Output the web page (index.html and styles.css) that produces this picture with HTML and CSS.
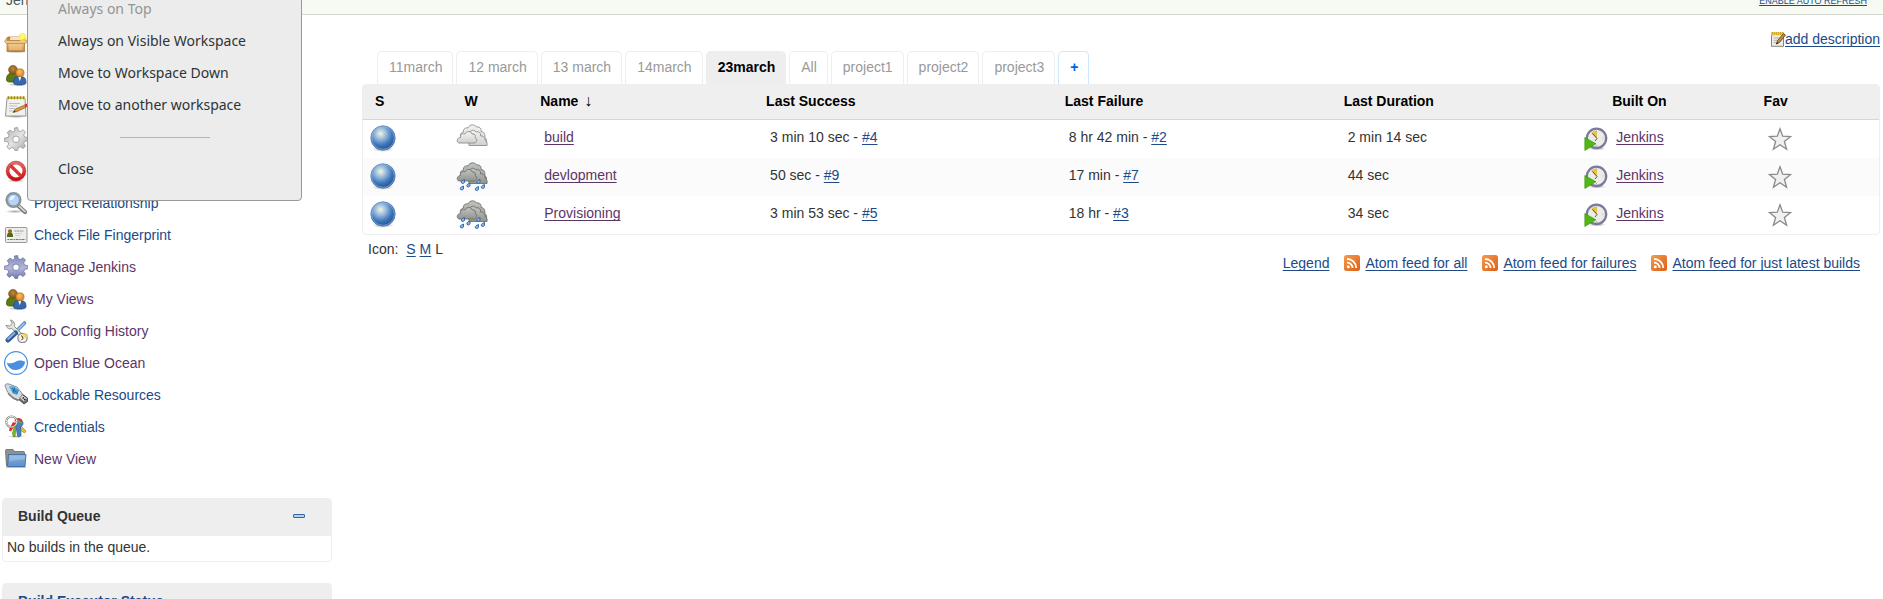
FILE: index.html
```html
<!DOCTYPE html>
<html lang="en">
<head>
<meta charset="utf-8">
<title>23march [Jenkins]</title>
<link rel="stylesheet" href="styles.css">
</head>
<body>
<svg class="sprite" width="0" height="0" aria-hidden="true">
  <defs>
    <radialGradient id="g-ball" cx=".4" cy=".32" r=".62"><stop offset="0" stop-color="#f3f6dc"/><stop offset=".35" stop-color="#9dbde0"/><stop offset=".75" stop-color="#3f78bb"/><stop offset="1" stop-color="#2b5c9e"/></radialGradient>
    <linearGradient id="g-cloud" x1="0" y1="0" x2="0" y2="1"><stop offset="0" stop-color="#f4f4f2"/><stop offset="1" stop-color="#cfcfcd"/></linearGradient>
    <linearGradient id="g-dark" x1="0" y1="0" x2="0" y2="1"><stop offset="0" stop-color="#c2c4c0"/><stop offset="1" stop-color="#91938f"/></linearGradient>
    <linearGradient id="g-grey" x1="0" y1="0" x2="1" y2="1"><stop offset="0" stop-color="#a9a9a9"/><stop offset=".5" stop-color="#e4e4e4"/><stop offset="1" stop-color="#a4a4a4"/></linearGradient>
    <linearGradient id="g-purple" x1="0" y1="0" x2="0" y2="1"><stop offset="0" stop-color="#7f8ab5"/><stop offset=".55" stop-color="#b3b6dc"/><stop offset="1" stop-color="#7476a8"/></linearGradient>
    <linearGradient id="g-red" x1="0" y1="0" x2="0" y2="1"><stop offset="0" stop-color="#e36a6a"/><stop offset="1" stop-color="#cf0c0c"/></linearGradient>
    <linearGradient id="g-box" x1="0" y1="0" x2="0" y2="1"><stop offset="0" stop-color="#f2c886"/><stop offset="1" stop-color="#c58a42"/></linearGradient>
    <linearGradient id="g-folder" x1="0" y1="0" x2="0" y2="1"><stop offset="0" stop-color="#89b1dd"/><stop offset="1" stop-color="#5c8fca"/></linearGradient>
    <radialGradient id="g-brown" cx=".5" cy=".4" r=".6"><stop offset="0" stop-color="#c08a3e"/><stop offset="1" stop-color="#805215"/></radialGradient>
    <radialGradient id="g-orange" cx=".45" cy=".4" r=".6"><stop offset="0" stop-color="#ffc36b"/><stop offset="1" stop-color="#d3801c"/></radialGradient>
    <linearGradient id="g-rss" x1="0" y1="0" x2="1" y2="1"><stop offset="0" stop-color="#f49a4c"/><stop offset="1" stop-color="#dd6018"/></linearGradient>
    <radialGradient id="g-shade"><stop offset="0" stop-color="#000" stop-opacity=".35"/><stop offset="1" stop-color="#000" stop-opacity="0"/></radialGradient>
    <linearGradient id="g-usb" x1="0" y1="0" x2="1" y2="1"><stop offset="0" stop-color="#74c4ec"/><stop offset="1" stop-color="#1f83c4"/></linearGradient>
  </defs>

  <symbol id="i-box" viewBox="0 0 24 24">
    <ellipse cx="12" cy="20.500" rx="11" ry="2" fill="url(#g-shade)"/>
    <path d="M4 6h16l1.500 5h-19z" fill="#b98445" stroke="#b5772a" stroke-width=".8"/>
    <path d="M6.500 6h11l.7 3H5.800z" fill="#f6e3c3"/>
    <path d="M3 11h17.500v9.500H3z" fill="url(#g-box)" stroke="#b0722b" stroke-width=".8"/>
    <path d="M3.500 6 .5 10.500l2 2h19l2-2L20 6.500l1 3H3z" fill="#edc386" stroke="#b98445" stroke-width=".7"/>
    <path d="M5 13h13v6H5z" fill="#fad9a3" opacity=".45"/>
    <circle cx="18.500" cy="6" r="4.200" fill="#fbf04a" opacity=".75"/><circle cx="18.500" cy="6" r="2.200" fill="#fffb70"/>
  </symbol>
  <symbol id="i-people" viewBox="0 0 24 24">
    <ellipse cx="13" cy="21.500" rx="10" ry="1.700" fill="url(#g-shade)"/>
    <path d="M2.500 16.500c0-5 2.500-6.500 6.500-6.500s6 2 6 5l-1 4H5.500c-2 0-3-.8-3-2.500z" fill="#5d7a16" stroke="#3e5606" stroke-width=".8"/>
    <circle cx="9" cy="6.800" r="4.400" fill="url(#g-brown)" stroke="#74490f" stroke-width=".6"/>
    <path d="M9.500 19.500c0-4.500 2-6 6.200-6s6.300 1.500 6.300 6c0 1.500-1.500 2.500-6.200 2.500s-6.300-1-6.300-2.500z" fill="#3768ae" stroke="#1e4780" stroke-width=".8"/>
    <path d="m14.300 13.800 1.500 4.500 1.500-4.500z" fill="#fff"/>
    <circle cx="16" cy="9.800" r="4.100" fill="url(#g-orange)" stroke="#c2721a" stroke-width=".6"/>
  </symbol>
  <symbol id="i-notepad" viewBox="0 0 24 24">
    <ellipse cx="12" cy="21.500" rx="11" ry="1.600" fill="url(#g-shade)"/>
    <path d="M3 3h18l1 18H1.500z" fill="#f0f0ee" stroke="#8b8d88" stroke-width=".9"/>
    <path d="M3 1.500h18v2.500H3z" fill="#c9bb45"/><path d="M4.500 1.300v3m3-3v3m3-3v3m3-3v3m3-3v3m3-3v3" stroke="#8b7b00" stroke-width=".8"/>
    <path d="M5 8.500h11M5 11h8m-8 2.500h6m-6 2.500h4" stroke="#bfc0bd"/>
    <path d="m9 17.500 2.500-3.500L21 10l1.500 2-9.500 4.500z" fill="#d99b3b" stroke="#89591a" stroke-width=".7"/>
    <path d="m9 17.500 1.500-2.500 1 1.500z" fill="#333"/><path d="m20.500 9.500 2.500-1 1 2.500-2.300 1.500z" fill="#d33"/>
  </symbol>
  <symbol id="i-cog" viewBox="0 0 24 24">
    <path d="m10.300 1 .5 3 -2.300.9L6 3 3.200 5.600 5 8.200l-1 2.300-3.500.5v3.300l3.300.5.900 2.300L2.800 20l2.500 2.400L7.800 20.500l2.500 1 .6 2h2.700l.6-2.800 2.300-.9 2.700 1.700 2.300-2.400-1.700-2.600.9-2.200 3.100-.5v-3.200l-3.200-.6-.9-2.200 1.800-2.700-2.400-2.400-2.600 1.800-2.300-.9-.5-3.100z"/>
    <circle cx="12" cy="12.300" r="3.300" fill="#fff" stroke-width=".8"/>
  </symbol>
  <symbol id="i-stop" viewBox="0 0 24 24">
    <ellipse cx="12" cy="21.800" rx="9" ry="1.800" fill="url(#g-shade)"/>
    <circle cx="12" cy="12" r="8.200" fill="#fff" stroke="url(#g-red)" stroke-width="3.400"/>
    <path d="m6.500 6.500 11 11" stroke="#d93535" stroke-width="3.200"/>
    <circle cx="12" cy="12" r="9.900" fill="none" stroke="#b51a1a" stroke-width=".5"/>
  </symbol>
  <symbol id="i-search" viewBox="0 0 24 24">
    <ellipse cx="11" cy="20.500" rx="10" ry="1.700" fill="url(#g-shade)"/>
    <path d="m14 14.500 7 6.500" stroke="#777975" stroke-width="4.200" stroke-linecap="round"/><path d="m15 15 6 5.600" stroke="#d2d3d0" stroke-width="1.800" stroke-linecap="round"/>
    <circle cx="9.500" cy="9" r="7.200" fill="#b9d4f2" stroke="#8d8f8b" stroke-width="1.600"/>
    <circle cx="9.500" cy="9" r="5.900" fill="none" stroke="#5b87c4" stroke-width=".9"/>
    <path d="M5.500 9c0-3 2-4.500 5.500-4.500-1 3.500-2.500 5-5.500 4.500z" fill="#eef6ff"/>
  </symbol>
  <symbol id="i-card" viewBox="0 0 24 24">
    <rect x="1.500" y="4.500" width="21.500" height="15" rx="1" fill="#ededeb" stroke="#999b96"/>
    <path d="M3 13c0-2.500 1-3.500 3-3.500s3 1 3 3.500v1H3z" fill="#4c6b13"/><circle cx="6" cy="8.300" r="2" fill="#9b6520"/>
    <path d="M10.500 8h9" stroke="#8a8c88" stroke-dasharray="2 .6"/><path d="M11 10.500h7m-7 2h5" stroke="#c8cac5" stroke-width=".8"/>
    <path d="M3.500 16.500h18" stroke="#777" stroke-dasharray="1.500 .7 3 .7"/>
  </symbol>
  <symbol id="i-tools" viewBox="0 0 24 24">
    <path d="m20.500 4-7.500 7.500" stroke="#5b8fc7" stroke-width="3.600" stroke-linecap="round"/><path d="m20.500 4-7 7" stroke="#a9cbee" stroke-width="1.400"/>
    <path d="M2 6.500c1 2.800 3.500 4 6 3l10.500 11 2.800-2.500L10.500 7.500c.8-3-1-6-4-6.500l1.800 3.500L5.500 7z" fill="#e3e4e2" stroke="#8b8d89"/>
    <path d="m11.500 14-7.500 7" stroke="#315c95" stroke-width="5" stroke-linecap="round"/><path d="m10.500 14-6.500 6" stroke="#8eb4de" stroke-width="1.800" stroke-linecap="round"/>
    <circle cx="18.500" cy="19" r="4.700" fill="#f7f3d8" stroke="#8780a8" stroke-width="1.200"/><path d="M18.500 14.500h5.500V19h-5.500z" fill="#efd34b" opacity=".7"/><path d="m17.500 16.500 1.500 2.800-1.500 1.800" fill="none" stroke="#333"/>
  </symbol>
  <symbol id="i-ocean" viewBox="0 0 24 24">
    <circle cx="12" cy="12" r="11.400" fill="#fff" stroke="#4a90e2" stroke-width="1.200"/>
    <path d="M2.700 11.800c3 .8 5.300.8 8.500-.8 3.500-1.700 6-2 10-.2A9.400 9.400 0 0 1 2.700 11.800z" fill="#4a90e2"/>
  </symbol>
  <symbol id="i-usb" viewBox="0 0 24 24">
    <path d="m13 15 4.500-4.500 6 4.500v3.500L20 21z" fill="#6d6f6c" stroke="#333" stroke-width=".8"/><path d="m15.500 14.500 2.500-2.500 5 3.500-3 3z" fill="#d8d9d6"/><path d="m18.500 15.500 1.500-1m0 2.500 1.500-1" stroke="#111" stroke-width="1.200"/>
    <path d="M1 3C1 1 2.500.5 5 1l8 3 5.500 7L14.500 17 9 14.500 3.500 9z" fill="#d6d8dc" stroke="#85878b" stroke-width=".9"/>
    <path d="M4.500 3.500 9 2.800l6 4.500-1.800 4.500L9 10.500z" fill="url(#g-usb)"/><path d="m7.500 5 5 4m-3.500.5 1.500-5" stroke="#12609a" stroke-width=".9"/>
    <path d="m4 10.500 5.500 5 5 2" fill="none" stroke="#777" stroke-width="1.400"/>
  </symbol>
  <symbol id="i-keys" viewBox="0 0 24 24">
    <ellipse cx="12" cy="21.500" rx="9" ry="1.500" fill="url(#g-shade)"/>
    <path d="m14 8 8 8-1 1.700-2.500-.7-5-5z" fill="#e0bb42" stroke="#ad8a25" stroke-width=".7"/>
    <path d="M12 8 7 16.500l-2-1 .5-2L9 7z" fill="#d93027"/>
    <path d="m12 10-1 11.500H9.500l-1-3 2-8z" fill="#7cbb27" stroke="#4c8a08" stroke-width=".7"/>
    <path d="M12 11c-1-2 0-5 3-5.500s5 2 3.500 4.500l-2 2 .5 8.500-2.500 1.500-1-1.500z" fill="#4a7fc0" stroke="#2a5c99" stroke-width=".8"/>
    <path d="M11 6c2-3 6-2.500 7 1" fill="none" stroke="#d43c2c" stroke-width="2"/><path d="M12 8c2-2 4-2 6 0" fill="none" stroke="#66ad28" stroke-width="1.500"/>
    <circle cx="7.500" cy="6.700" r="5.300" fill="none" stroke="#777975" stroke-width="2"/><circle cx="7.500" cy="6.700" r="5.300" fill="none" stroke="#efefed" stroke-width="1"/>
  </symbol>
  <symbol id="i-folder" viewBox="0 0 24 24">
    <path d="M1.500 3.500Q1.500 2.500 2.500 2.500H9L10.500 4.500h9q1 0 1 1V19H2.500z" fill="#8f918c" stroke="#666864" stroke-width=".8"/>
    <path d="M4.500 7.500h17.500L21 19.500H3.500z" fill="url(#g-folder)" stroke="#376fae" stroke-width=".9"/><path d="M5.400 8.600h15.400l-.3 4q-8 0-15.300 2z" fill="#fff" opacity=".2"/>
    <path d="M2 20.500h20" stroke="#000" stroke-opacity=".25"/>
  </symbol>
  <symbol id="i-edit" viewBox="0 0 16 16">
    <path d="M1.500 2h12v13.300h-12z" fill="#ecece9" stroke="#777974" stroke-width=".9"/><path d="M1 1.300h13v3H1z" fill="#f0c845"/><path d="M2.500 1v3m2-3v3m2-3v3m2-3v3m2-3v3m2-3v3" stroke="#c6950c" stroke-width=".6"/>
    <path d="M3.500 7h6m-6 2.300h4m-4 2.300h3" stroke="#b3b5b0"/><path d="m6.500 13 1-3.500L13.500 2.500l2 1.500-6 7.500z" fill="#c08e43" stroke="#5b3b10" stroke-width=".8"/><path d="m6.300 13.300.6-2 1.300 1z" fill="#111"/>
  </symbol>
  <symbol id="i-rss" viewBox="0 0 16 16">
    <rect width="16" height="16" rx="2.500" fill="url(#g-rss)"/>
    <circle cx="4.300" cy="11.800" r="1.500" fill="#fff"/><path d="M3 7.600A5.400 5.400 0 0 1 8.500 13.100M3 4A9.200 9.200 0 0 1 12.300 13.100" fill="none" stroke="#fff" stroke-width="1.800"/>
  </symbol>
  <symbol id="i-ball" viewBox="0 0 26 28">
    <ellipse cx="13" cy="24" rx="11" ry="3" fill="url(#g-shade)"/>
    <circle cx="13" cy="13" r="12.200" fill="url(#g-ball)" stroke="#5580b2" stroke-width=".8"/><circle cx="13" cy="13" r="11.300" fill="none" stroke="#9dbfe5" stroke-width=".8" opacity=".7"/>
  </symbol>
  <symbol id="i-puffs" viewBox="0 0 32 22">
    <path d="M5 15C3 9 6 8.500 7.500 8 7 4.500 9.500 3.500 12 4c1.500-4 7-4 8.500-1 4-.5 5 2 4.500 4.500 4 0 4 4 4 6 2 2 2 4.500 1 7H16z"/>
    <path d="M13 10c1-4 5-5 7-2 3-1 5 1 4.500 4 4-.5 4.500 3 5 5 1.500 1 2 3 1.500 4.500H13z"/>
    <path d="M3 19C0 18 1 13.500 4.500 13.500 4 10 7 9 9 10c1.500-3.500 7-3 7 0 3-.5 4 1.500 3 3.500 3 1.500 2 5.500-1 5.500z"/>
  </symbol>
  <symbol id="i-clouds" viewBox="0 0 32 30"><use href="#i-puffs" width="32" height="22" fill="url(#g-cloud)" stroke="#8e908d" stroke-width=".9"/></symbol>
  <symbol id="i-rain" viewBox="0 0 32 30">
    <use href="#i-puffs" width="32" height="22" fill="url(#g-dark)" stroke="#71736f" stroke-width=".9"/>
    <g fill="#8bb8ec" stroke="#2862ac" stroke-width=".9"><path id="drop" d="M8.500 17.500v3q-1.300 1.800-3 .5-.8-1.500.8-2.500z"/><use href="#drop" x="5.500" y="3.500"/><use href="#drop" x="-1" y="6.500"/><use href="#drop" x="15.500" y="0"/><use href="#drop" x="20" y="5"/><use href="#drop" x="14" y="7"/></g>
  </symbol>
  <symbol id="i-clock" viewBox="0 0 24 24">
    <ellipse cx="13" cy="21.500" rx="9" ry="2" fill="url(#g-shade)"/>
    <circle cx="12.500" cy="11.300" r="9.700" fill="#ebebe7" stroke="#7b7a9c" stroke-width="2.300"/>
    <path d="m13 11.500-6-5.500Q9 3.500 13 3.500z" fill="#e6c24a"/><path d="m8.500 6.500 4.500 5-2 2.500" fill="none" stroke="#444" stroke-width=".9"/>
    <path d="M12.500 3.500v1m7 6.500h-1m-6 8v-1" stroke="#aaa"/>
    <path d="M.8 10.500 12 16.800.8 23.500z" fill="#4fb815" stroke="#36900a" stroke-width=".6"/>
  </symbol>
  <symbol id="i-star" viewBox="0 0 24 24">
    <path d="m12 1.800 2.700 7.400 8 .3-6.300 4.900 2.200 7.900L12 17.700l-6.600 4.600 2.200-7.900L1.300 9.500l8-.3z" fill="#f0f0f0" stroke="#8a8a8a" stroke-width="1.300"/>
  </symbol>
</svg>

<header class="topbar">
  <a class="crumb" href="#">Jenkins</a>
  <a class="refresh" href="#">ENABLE AUTO REFRESH</a>
</header>

<div class="page">
  <aside class="side">
    <nav class="tasks">
      <a href="#" aria-label="New Item"><svg><use href="#i-box"/></svg></a>
      <a href="#" aria-label="People"><svg><use href="#i-people"/></svg></a>
      <a href="#" aria-label="Build History"><svg><use href="#i-notepad"/></svg></a>
      <a href="#" aria-label="Edit View"><svg class="cog-grey"><use href="#i-cog"/></svg></a>
      <a href="#" aria-label="Delete View"><svg><use href="#i-stop"/></svg></a>
      <a href="#"><svg><use href="#i-search"/></svg>Project Relationship</a>
      <a href="#"><svg><use href="#i-card"/></svg>Check File Fingerprint</a>
      <a href="#" class="seen"><svg class="cog-purple"><use href="#i-cog"/></svg>Manage Jenkins</a>
      <a href="#" class="seen"><svg><use href="#i-people"/></svg>My Views</a>
      <a href="#" class="seen"><svg><use href="#i-tools"/></svg>Job Config History</a>
      <a href="#" class="seen"><svg><use href="#i-ocean"/></svg>Open Blue Ocean</a>
      <a href="#"><svg><use href="#i-usb"/></svg>Lockable Resources</a>
      <a href="#"><svg><use href="#i-keys"/></svg>Credentials</a>
      <a href="#" class="seen"><svg><use href="#i-folder"/></svg>New View</a>
    </nav>
    <section class="pane">
      <h2>Build Queue<button type="button" class="collapse" aria-label="Collapse"></button></h2>
      <p>No builds in the queue.</p>
    </section>
    <section class="pane">
      <h2><a href="#">Build Executor Status</a></h2>
    </section>
  </aside>

  <main class="main">
    <div class="describe"><svg class="small"><use href="#i-edit"/></svg><a href="#">add description</a></div>
    <nav class="tabs">
      <a href="#">11march</a><a href="#">12 march</a><a href="#">13 march</a><a href="#">14march</a><a href="#" class="active">23march</a><a href="#">All</a><a href="#">project1</a><a href="#">project2</a><a href="#">project3</a><a href="#" class="add">+</a>
    </nav>
    <table class="jobs">
      <colgroup><col class="c-s"><col class="c-w"><col class="c-name"><col class="c-ok"><col class="c-fail"><col class="c-dur"><col class="c-built"><col></colgroup>
      <thead>
        <tr><th>S</th><th>W</th><th>Name <span class="arrow">↓</span></th><th>Last Success</th><th>Last Failure</th><th>Last Duration</th><th class="built">Built On</th><th>Fav</th></tr>
      </thead>
      <tbody>
        <tr><td class="status"><svg class="ball"><use href="#i-ball"/></svg></td><td class="weather"><svg class="sky"><use href="#i-clouds"/></svg></td><td><a class="seen" href="#">build</a></td><td>3 min 10 sec - <a href="#">#4</a></td><td>8 hr 42 min - <a href="#">#2</a></td><td>2 min 14 sec</td><td><span class="node"><svg><use href="#i-clock"/></svg><a class="seen" href="#">Jenkins</a></span></td><td><button type="button" class="fav" aria-label="Favorite"><svg><use href="#i-star"/></svg></button></td></tr>
        <tr><td class="status"><svg class="ball"><use href="#i-ball"/></svg></td><td class="weather"><svg class="sky"><use href="#i-rain"/></svg></td><td><a class="seen" href="#">devlopment</a></td><td>50 sec - <a href="#">#9</a></td><td>17 min - <a href="#">#7</a></td><td>44 sec</td><td><span class="node"><svg><use href="#i-clock"/></svg><a class="seen" href="#">Jenkins</a></span></td><td><button type="button" class="fav" aria-label="Favorite"><svg><use href="#i-star"/></svg></button></td></tr>
        <tr><td class="status"><svg class="ball"><use href="#i-ball"/></svg></td><td class="weather"><svg class="sky"><use href="#i-rain"/></svg></td><td><a class="seen" href="#">Provisioning</a></td><td>3 min 53 sec - <a href="#">#5</a></td><td>18 hr - <a href="#">#3</a></td><td>34 sec</td><td><span class="node"><svg><use href="#i-clock"/></svg><a class="seen" href="#">Jenkins</a></span></td><td><button type="button" class="fav" aria-label="Favorite"><svg><use href="#i-star"/></svg></button></td></tr>
      </tbody>
    </table>
    <div class="foot">
      <div class="sizes"><span class="label">Icon:</span><a href="#">S</a> <a href="#">M</a> <span>L</span></div>
      <div class="feeds">
        <a href="#">Legend</a>
        <span class="feed"><svg class="small"><use href="#i-rss"/></svg><a href="#">Atom feed for all</a></span>
        <span class="feed"><svg class="small"><use href="#i-rss"/></svg><a href="#">Atom feed for failures</a></span>
        <span class="feed"><svg class="small"><use href="#i-rss"/></svg><a href="#">Atom feed for just latest builds</a></span>
      </div>
    </div>
  </main>
</div>

<div class="winmenu" role="menu">
  <button type="button" role="menuitem" disabled>Always on Top</button>
  <button type="button" role="menuitem">Always on Visible Workspace</button>
  <button type="button" role="menuitem">Move to Workspace Down</button>
  <button type="button" role="menuitem">Move to another workspace</button>
  <hr>
  <button type="button" role="menuitem">Close</button>
</div>
</body>
</html>
```
FILE: styles.css
```css
* { box-sizing: border-box; }
html { height: 100%; overflow: hidden; }
body {
  margin: 0;
  height: 100%;
  overflow: hidden;
  background: #fff;
  color: #333;
  font: 14px/16px "Liberation Sans", Arial, sans-serif;
}
a { color: #204a87; text-decoration-skip-ink: none; text-underline-offset: 2px; }
a.seen { color: #5c3566; }
svg { display: block; flex: none; width: 24px; height: 24px; }
.sprite { position: absolute; width: 0; height: 0; }
svg.small { width: 16px; height: 16px; }

/* Breadcrumb bar, scrolled almost out of view */
.topbar {
  display: flex;
  justify-content: space-between;
  align-items: flex-end;
  height: 15px;
  padding: 0 16px 0 6px;
  overflow: hidden;
  background: #f6faf2;
  border-bottom: 1px solid #d3d7cf;
}
.crumb { padding-bottom: 6px; color: #4d545d; text-decoration: none; }
.refresh { padding-bottom: 7px; font-size: 9px; line-height: 12px; text-underline-offset: 1px; }

.page { display: flex; align-items: flex-start; }
.side { flex: none; width: 362px; padding: 12px 30px 0 2px; }
.tasks { display: flex; flex-direction: column; margin-bottom: 23px; }
.tasks a {
  display: flex;
  align-items: center;
  gap: 6px;
  height: 32px;
  padding-left: 2px;
  text-decoration: none;
}
.cog-grey { fill: url(#g-grey); stroke: #8f8f8f; stroke-width: .7; }
.cog-purple { fill: url(#g-purple); stroke: #6b6f9f; stroke-width: .7; }

.pane { margin-bottom: 21px; border: 1px solid #eee; border-radius: 4px; }
.pane h2 {
  display: flex;
  justify-content: space-between;
  align-items: center;
  height: 37px;
  margin: 0;
  padding: 0 26px 4px 15px;
  background: #eee;
  font-size: 14px;
}
.pane h2 a { text-decoration: none; }
.pane p { margin: 0; padding: 3px 4px 6px; }
.collapse { width: 12px; height: 4px; padding: 0; border: 1px solid #3465a4; border-radius: 1px; background: #b5d0ee; }

.main { flex: 1; min-width: 0; padding: 16px 3px 0 0; }
.describe { display: flex; justify-content: flex-end; height: 20px; }
.describe a { margin-left: -1px; }
.tabs { display: flex; gap: 3px; height: 33px; padding-left: 15px; }
.tabs a {
  padding: 7px 10px 0 11px;
  border: 1px solid #eee;
  border-bottom: 0;
  border-radius: 5px 5px 0 0;
  color: #999;
  text-decoration: none;
}
.tabs .active { background: #eee; color: #000; font-weight: bold; }
.tabs .add { border-color: #cce7ff; color: #0063dc; font-weight: bold; }

.jobs {
  width: 100%;
  table-layout: fixed;
  border: 1px solid #eee;
  border-radius: 4px;
  border-spacing: 0;
}
.c-s { width: 5.9%; }
.c-w { width: 5%; }
.c-name { width: 14.9%; }
.c-ok { width: 19.7%; }
.c-fail { width: 18.4%; }
.c-dur { width: 15.6%; }
.c-built { width: 12.1%; }
.jobs th {
  height: 35px;
  padding: 0 0 2px 12px;
  background: #efefef;
  border-bottom: 1px solid #d6d6d6;
  color: #000;
  text-align: left;
}
.jobs th.built { padding-left: 44px; }
.arrow { margin-left: 2px; font-size: 16px; font-weight: normal; }
.jobs td { height: 38px; padding: 0 0 4px 16px; }
.jobs tr:nth-child(even) td { background: #fbfbfb; }
.jobs .status { padding: 0 0 0 7px; }
.jobs .weather { padding: 0 0 0 4px; }
svg.ball { width: 26px; height: 28px; }
svg.sky { width: 32px; height: 30px; }
.node { display: flex; gap: 8px; height: 24px; margin-top: 4px; }
.node a { margin-top: 2px; }
.fav { display: block; margin-top: 4px; padding: 0; border: 0; background: none; }

.foot { display: flex; justify-content: space-between; padding: 6px 20px 0 6px; }
.sizes .label { margin-right: 8px; }
.feeds { display: flex; gap: 15px; padding-top: 14px; }
.feed { display: flex; gap: 5px; }

/* Window-manager menu floating over the page */
.winmenu {
  position: absolute;
  top: -8px;
  left: 27px;
  width: 275px;
  padding-bottom: 15px;
  background: #ececec;
  border: 1px solid #999;
  border-radius: 4px;
}
.winmenu button {
  display: block;
  width: 100%;
  height: 32px;
  padding: 0 30px;
  border: 0;
  background: none;
  color: #2e3436;
  font: 14px/20px "Noto Sans", "Open Sans", sans-serif;
  text-align: left;
}
.winmenu button:disabled { color: #929595; }
.winmenu hr { width: 90px; margin: 16px auto 15px; border: 0; border-top: 1px solid #b6b6b6; }
```
